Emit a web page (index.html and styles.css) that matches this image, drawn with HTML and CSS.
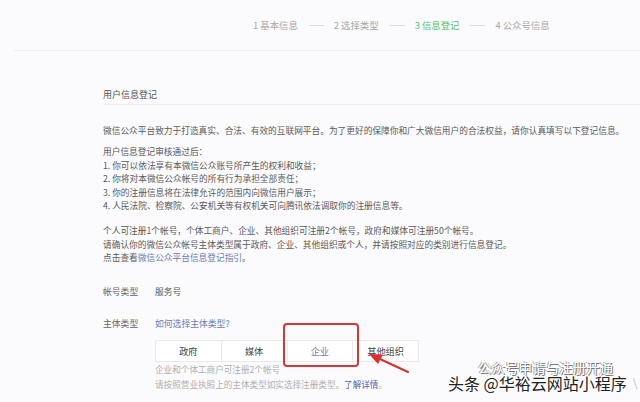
FILE: index.html
```html
<!DOCTYPE html>
<html lang="zh-CN">
<head>
  <meta charset="UTF-8" />
  <title>信息登记</title>
  <link rel="stylesheet" href="styles.css">
</head>
<body>
  <div class="page">
    <div class="steps">
      <span class="step">1 基本信息</span><span class="dash"></span>
      <span class="step">2 选择类型</span><span class="dash"></span>
      <span class="step current">3 信息登记</span><span class="dash"></span>
      <span class="step">4 公众号信息</span>
    </div>

    <div class="main">
      <h2 class="title">用户信息登记</h2>
      <p class="intro">微信公众平台致力于打造真实、合法、有效的互联网平台。为了更好的保障你和广大微信用户的合法权益，请你认真填写以下登记信息。</p>
      <p class="rules">用户信息登记审核通过后：<br>
        1. 你可以依法享有本微信公众账号所产生的权利和收益；<br>
        2. 你将对本微信公众帐号的所有行为承担全部责任；<br>
        3. 你的注册信息将在法律允许的范围内向微信用户展示；<br>
        4. 人民法院、检察院、公安机关等有权机关可向腾讯依法调取你的注册信息等。</p>
      <p class="rules notes">个人可注册1个帐号，个体工商户、企业、其他组织可注册2个帐号，政府和媒体可注册50个帐号。<br>
        请确认你的微信公众帐号主体类型属于政府、企业、其他组织或个人，并请按照对应的类别进行信息登记。<br>
        点击查看<a class="link" href="#">微信公众平台信息登记指引</a>。</p>

      <div class="form">
        <div class="row">
          <span class="label">帐号类型</span>
          <span class="value">服务号</span>
        </div>
        <div class="row type-row">
          <span class="label">主体类型</span>
          <div class="value">
            <a class="link" href="#">如何选择主体类型?</a>
            <div class="seg">
              <span class="seg-item">政府</span>
              <span class="seg-item">媒体</span>
              <span class="seg-item selected">企业</span>
              <span class="seg-item">其他组织</span>
              <span class="mark-box"></span>
              <svg class="arrow" width="44" height="22" viewBox="0 0 44 22">
                <line x1="40" y1="19" x2="12" y2="6" stroke="#d8312c" stroke-width="2" stroke-linecap="round"/>
                <polygon points="1,1 15,1.5 10,11" fill="#d8312c"/>
              </svg>
            </div>
            <p class="tips">企业和个体工商户可注册2个帐号<br>
              请按照营业执照上的主体类型如实选择注册类型。<a class="link strong" href="#">了解详情</a>。</p>
          </div>
        </div>
      </div>
    </div>

    <div class="wm-back">公众号申请与注册开通</div>
    <div class="wm">头条 @华裕云网站小程序</div>
    <span class="corner">\</span>
  </div>
</body>
</html>
```

FILE: styles.css
```css
body {
  margin: 0;
  background: #fbfafc;
  font-family: "Noto Sans CJK SC", "Noto Sans", sans-serif;
  color: #5a5a5a;
}
.page {
  position: relative;
  width: 640px;
  height: 402px;
  overflow: hidden;
}
.steps {
  display: flex;
  align-items: center;
  height: 50px;
  margin-left: 14px;
  padding-left: 239px;
  border-bottom: 1px solid #efeef1;
  font-size: 9.4px;
  color: #a8a8a8;
}
.step.current {
  color: #55c16b;
}
.dash {
  width: 15px;
  height: 1px;
  margin: 0 10px 0 11px;
  background: #dcdcdc;
}
.main {
  padding-left: 103px;
}
.title {
  margin: 34px 0 0;
  font-size: 9px;
  font-weight: normal;
  line-height: 19px;
  color: #555;
  border-bottom: 1px solid #efeef1;
}
.intro, .rules {
  margin: 19px 0 0;
  font-size: 8.7px;
  line-height: 13.5px;
}
.rules {
  margin-top: 7.5px;
}
.rules.notes {
  margin-top: 11.5px;
}
.link {
  color: #6a7db0;
  text-decoration: none;
}
.form {
  margin-top: 20px;
  font-size: 8.8px;
}
.row {
  display: flex;
  line-height: 14px;
}
.type-row {
  margin-top: 18px;
}
.label {
  width: 52px;
  color: #666;
}
.seg {
  position: relative;
  display: flex;
  width: 262px;
  margin-top: 9px;
  background: #fff;
  border: 1px solid #e9e9ec;
}
.seg-item {
  flex: 1;
  height: 20px;
  line-height: 20px;
  text-align: center;
  font-size: 9.2px;
  color: #444;
  border-left: 1px solid #e9e9ec;
}
.seg-item:first-child {
  border-left: none;
}
.seg-item.selected {
  color: #6a7db0;
}
.mark-box {
  position: absolute;
  left: 127px;
  top: -18px;
  width: 72px;
  height: 40px;
  border: 2px solid #d4393a;
  border-radius: 4px;
}
.arrow {
  position: absolute;
  left: 212px;
  top: 12px;
}
.tips {
  margin: 0;
  font-size: 8.6px;
  line-height: 15px;
  color: #b0b0b0;
}
.tips .strong {
  color: #4866ad;
}
.wm-back {
  position: absolute;
  left: 478px;
  top: 359px;
  font-size: 13.5px;
  line-height: 16px;
  color: #fff;
  text-shadow: 1px 1px 0 #777, -1px 0 0 #999;
}
.wm {
  position: absolute;
  left: 448px;
  top: 373px;
  font-size: 16px;
  line-height: 20px;
  color: #222;
  text-shadow: 1px 1px 0 #fff, -1px -1px 0 #fff, 1px -1px 0 #fff, -1px 1px 0 #fff;
}
.corner {
  position: absolute;
  left: 633px;
  top: 374px;
  font-size: 11px;
  color: #bbb;
}
```
